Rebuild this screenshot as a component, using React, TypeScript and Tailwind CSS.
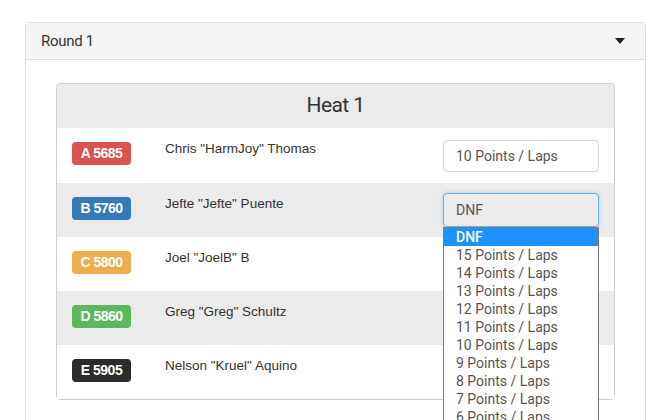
import React from 'react';

const racers = [
  { badge: 'A 5685', color: 'bg-[#d9534f]', name: 'Chris "HarmJoy" Thomas', value: '10 Points / Laps' },
  { badge: 'B 5760', color: 'bg-[#337ab7]', name: 'Jefte "Jefte" Puente', value: 'DNF', open: true },
  { badge: 'C 5800', color: 'bg-[#f0ad4e]', name: 'Joel "JoelB" B', value: '' },
  { badge: 'D 5860', color: 'bg-[#5cb85c]', name: 'Greg "Greg" Schultz', value: '' },
  { badge: 'E 5905', color: 'bg-[#2b2b2b]', name: 'Nelson "Kruel" Aquino', value: '' },
];

const options = [
  'DNF',
  '15 Points / Laps',
  '14 Points / Laps',
  '13 Points / Laps',
  '12 Points / Laps',
  '11 Points / Laps',
  '10 Points / Laps',
  '9 Points / Laps',
  '8 Points / Laps',
  '7 Points / Laps',
  '6 Points / Laps',
];

export default function App() {
  return (
    <div className="w-[670px] h-[420px] overflow-hidden bg-white pt-[22px] pl-[25px] pr-[24px] font-['Roboto',sans-serif]">
      <div className="border border-[#dddddd] rounded-t-[4px] h-[420px]">
        {/* Round header */}
        <div className="h-[37px] bg-[#f5f5f5] border-b border-[#dddddd] flex items-center justify-between pl-[15px] pr-[20px]">
          <span className="text-[15px] text-[#333] tracking-[-0.3px]">Round 1</span>
          <svg width="10" height="6" viewBox="0 0 10 6">
            <path d="M0 0 L10 0 L5 6 Z" fill="#222" />
          </svg>
        </div>

        {/* Body */}
        <div className="px-[30px] pt-[23px]">
          <div className="border border-[#cfcfcf] rounded-[4px]">
            <div className="h-[44px] bg-[#ebebeb] flex items-center justify-center rounded-t-[4px]">
              <span className="text-[21px] text-[#333] tracking-[-0.6px]">Heat 1</span>
            </div>
            {racers.map((r, i) => (
              <div
                key={r.badge}
                className={`relative flex items-start pt-3 pl-[15px] pr-[15px] ${i === 0 ? 'h-[55px]' : 'h-[54px]'} ${i % 2 === 1 ? 'bg-[#ebebeb]' : 'bg-white'}`}
              >
                <span
                  className={`${r.color} mt-[2px] w-[59px] h-[23px] rounded-[4px] flex items-center justify-center text-white text-[14px] font-bold tracking-[-0.5px] font-['Liberation_Sans',sans-serif]`}
                >
                  {r.badge}
                </span>
                <span className="ml-[34px] mt-[1px] text-[13.5px] text-[#333] leading-4 font-['Liberation_Sans',sans-serif]">
                  {r.name}
                </span>
                <div className="ml-auto">
                  {r.value && !r.open && (
                    <div className="w-[156px] h-[32px] border border-[#d6d6d6] rounded-[4px] bg-white flex items-center px-3 text-[14px] text-[#555]">
                      {r.value}
                    </div>
                  )}
                  {r.open && (
                    <div className="relative w-[156px] -mt-[2px]">
                      <div className="h-[34px] border border-[#66afe9] rounded-[4px] bg-[#ebebeb] flex items-center px-3 text-[14px] text-[#555] shadow-[0_0_4px_rgba(102,175,233,0.5)]">
                        {r.value}
                      </div>
                      <div className="absolute z-10 left-0 top-[34px] w-[156px] bg-white border border-[#7a7a7a]">
                        {options.map((o, j) => (
                          <div
                            key={o}
                            className={`h-[18px] leading-[18px] pl-[12px] text-[14px] ${j === 0 ? 'bg-[#1e90ff] text-white font-medium' : 'text-[#555]'}`}
                          >
                            {o}
                          </div>
                        ))}
                      </div>
                    </div>
                  )}
                </div>
              </div>
            ))}
          </div>
        </div>
      </div>
    </div>
  );
}
